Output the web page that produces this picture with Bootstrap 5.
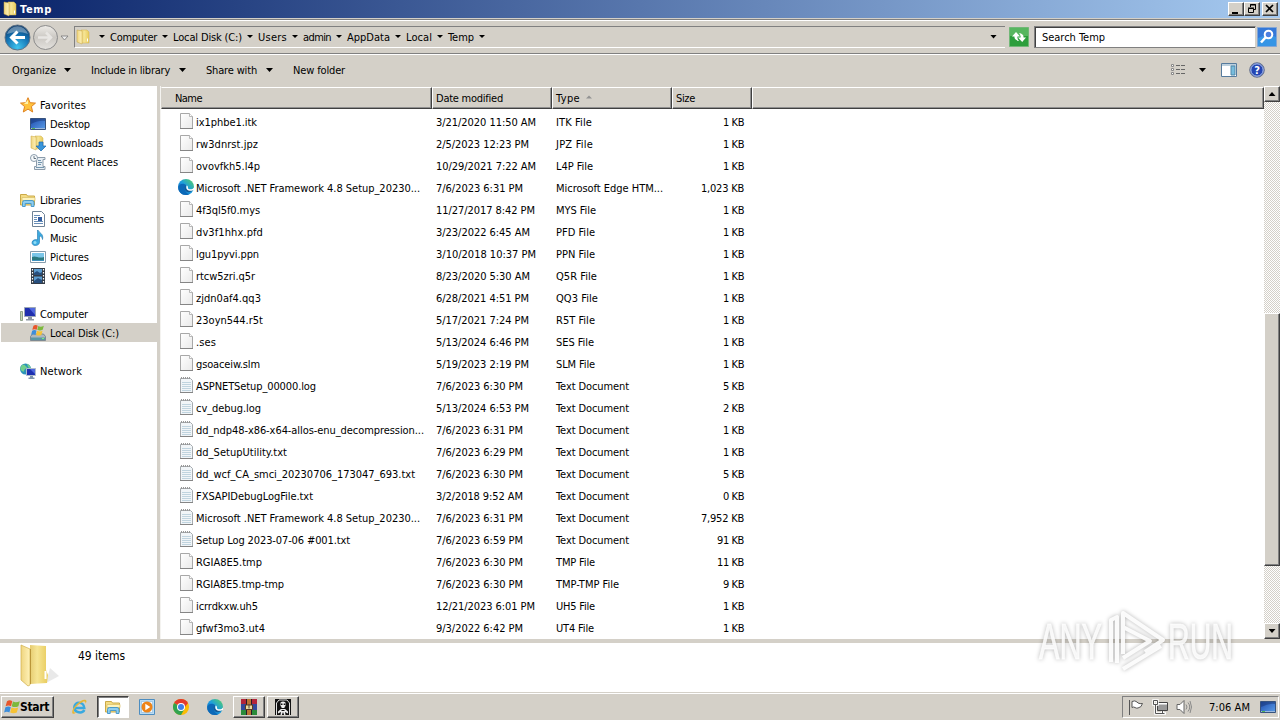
<!doctype html>
<html lang="en">

<head>
  <meta charset="utf-8">
  <meta name="viewport" content="width=device-width, initial-scale=1">
  <title>Temp</title>
  <link href="https://cdn.jsdelivr.net/npm/bootstrap@5.3.0/dist/css/bootstrap.min.css" rel="stylesheet">
  <style>
    :root {
      --face: #d4d0c8;
      --shade: #808080;
      --dark: #404040;
    }

    body {
      width: 1280px;
      height: 720px;
      overflow: hidden;
      background: var(--face);
      color: #000;
      font-family: Tahoma, "DejaVu Sans Condensed", "DejaVu Sans", sans-serif;
      font-size: 11px;
      line-height: 14px;
      white-space: nowrap;
    }

    body > div {
      flex: none;
    }

    svg {
      display: block;
      flex: none;
    }

    .fit {
      display: inline-block;
      padding-top: 2px;
    }

    .title-strip {
      height: 18px;
      padding: 0 2px 0 2px;
      background: linear-gradient(90deg, #0a246a, #a6caf0);
      color: #fff;
      font-weight: bold;
    }

    .raised {
      background: var(--face);
      border: 1px solid;
      border-color: #fff var(--dark) var(--dark) #fff;
      box-shadow: inset -1px -1px 0 var(--shade);
    }

    .win-btn {
      width: 16px;
      height: 14px;
      padding: 0;
    }

    .address-strip {
      height: 35px;
      margin-top: 1px;
      padding-left: 4px;
      border-top: 1px solid var(--shade);
      border-bottom: 1px solid var(--shade);
      box-shadow: inset 0 1px 0 #fff, 0 1px 0 #fff;
    }

    .address-box {
      height: 22px;
      margin-left: 4px;
      width: 931px;
      border: 1px solid var(--shade);
      border-right: 0;
      border-bottom-color: #fff;
    }

    .crumb {
      margin: 0 5px;
    }

    .tri {
      width: 7px;
      height: 4px;
      background: #000;
      clip-path: polygon(0 0, 100% 0, 50% 100%);
      flex: none;
    }

    .tri-sm {
      width: 6px;
      height: 3px;
    }

    .tri-up {
      clip-path: polygon(50% 0, 100% 100%, 0 100%);
    }

    .search-box {
      width: 222px;
      height: 22px;
      margin-left: 5px;
      padding-left: 7px;
      background: #fff;
      border: 1px solid var(--shade);
      border-right-color: var(--face);
      box-shadow: inset 1px 1px 0 var(--dark);
    }

    .command-strip {
      height: 32px;
      padding: 0 15px 0 12px;
    }

    .explorer {
      height: 553px;
    }

    .nav-pane {
      width: 160px;
      padding-top: 9px;
      background: #fff;
      border-right: 3px solid var(--face);
    }

    .nav-row {
      height: 19px;
      padding-left: 20px;
      gap: 4px;
    }

    .nav-row.child {
      padding-left: 30px;
    }

    .nav-row.chosen {
      margin: 0 -1px 0 1px;
      padding-left: 29px;
      background: var(--face);
    }

    .nav-gap {
      height: 19px;
    }

    .file-pane {
      background: #fff;
      border-left: 1px solid #f4f3f0;
    }

    .head-row {
      height: 23px;
      padding-top: 1px;
      background: var(--face);
    }

    .head-cell {
      height: 22px;
      padding-left: 3px;
      border: 1px solid;
      border-color: #fff #404040 #404040 #fff;
      box-shadow: inset -1px -1px 0 #909090;
    }

    .head-cell.col-name {
      padding-left: 13px;
      border-left-color: var(--face);
    }

    .col-name {
      width: 271px;
    }

    .col-other {
      width: 120px;
    }

    .col-size {
      width: 80px;
    }

    .file-list {
      padding-top: 2px;
    }

    .file-row {
      height: 22px;
      padding-left: 17px;
    }

    .file-row svg {
      margin-bottom: 2px;
    }

    .file-row .f-name {
      width: 258px;
      gap: 2px;
    }

    .file-row .f-size {
      width: 68px;
      text-align: right;
    }

    .scroll-rail {
      width: 16px;
      background: repeating-conic-gradient(#fff 0 25%, #d4d0c8 0 50%) 0 0 / 2px 2px;
    }

    .rail-btn {
      height: 16px;
    }

    .details-strip {
      height: 53px;
      background: #fff;
      border-top: 4px solid var(--face);
    }

    .task-strip {
      height: 28px;
      padding: 3px 1px 1px 1px;
      box-shadow: inset 0 1px 0 #d4d0c8, inset 0 2px 0 #fff;
    }

    .start-btn {
      width: 53px;
      height: 22px;
      padding-left: 2px;
      font-weight: bold;
      font-size: 12px;
    }

    .start-btn .fit {
      padding-top: 0;
    }

    .task-item {
      width: 32px;
      height: 22px;
      border: 1px solid transparent;
      margin-right: 2px;
    }

    .task-item.raised {
      border-color: #fff var(--dark) var(--dark) #fff;
    }

    .task-item.active {
      background: #fff;
      border-color: var(--dark) #fff #fff var(--dark);
      box-shadow: inset 1px 1px 0 var(--shade);
    }

    .tray {
      width: 157px;
      height: 22px;
      padding: 0 2px 0 5px;
      border: 1px solid;
      border-color: var(--shade) #fff #fff var(--shade);
    }

    .stamp {
      position: absolute;
      left: 1030px;
      top: 602px;
      pointer-events: none;
      overflow: visible;
      filter: drop-shadow(0 0 2px rgba(0, 0, 0, .32));
    }
  </style>
</head>

<body class="d-flex flex-column">

  <svg width="0" height="0" class="position-absolute">
    <defs>
      <linearGradient id="gFolder" x1="0" x2="1">
        <stop offset="0" stop-color="#e6cc71" />
        <stop offset=".4" stop-color="#f6e595" />
        <stop offset="1" stop-color="#e8cb5c" />
      </linearGradient>
      <linearGradient id="gFlap" x1="0" x2="1">
        <stop offset="0" stop-color="#efd580" />
        <stop offset="1" stop-color="#fff2b8" />
      </linearGradient>
      <linearGradient id="gScreen" x1="0" x2="1" y1="0" y2="1">
        <stop offset="0" stop-color="#1f4cae" />
        <stop offset="1" stop-color="#5b9ee8" />
      </linearGradient>
      <radialGradient id="gBack" cx=".5" cy=".9" r=".9">
        <stop offset="0" stop-color="#3fc4ee" />
        <stop offset=".55" stop-color="#1473b4" />
        <stop offset="1" stop-color="#0d3766" />
      </radialGradient>
      <linearGradient id="gFwd" x1="0" x2="0" y1="0" y2="1">
        <stop offset="0" stop-color="#eeece8" />
        <stop offset=".5" stop-color="#cbc8c3" />
        <stop offset="1" stop-color="#e4e2de" />
      </linearGradient>
      <linearGradient id="gEdge" x1="0" x2="1" y1="1" y2="0">
        <stop offset="0" stop-color="#0b57a8" />
        <stop offset=".5" stop-color="#1b9de2" />
        <stop offset="1" stop-color="#59d35c" />
      </linearGradient>
      <linearGradient id="gPaper" x1="0" x2="1" y1="0" y2="1">
        <stop offset="0" stop-color="#fff" />
        <stop offset="1" stop-color="#e9e9e9" />
      </linearGradient>
    </defs>

    <symbol id="i-folder" viewBox="0 0 16 16">
      <path d="M6 1h6l2 2v11H6z" fill="url(#gFolder)" stroke="#d3b34d" stroke-width=".5" />
      <path d="M2 1l5 1v13l-5-2z" fill="url(#gFlap)" stroke="#c8a640" stroke-width=".5" />
      <path d="M12.500 9.500v3" stroke="#fff" />
    </symbol>
    <symbol id="i-page" viewBox="-1 0 16 16">
      <path d="M1.500.5h9l3 3v12h-12z" fill="url(#gPaper)" stroke="#a8a8a8" />
      <path d="M10.500.5v3h3" fill="#fff" stroke="#a8a8a8" stroke-width=".8" />
      <path d="M1 15.500h13" stroke="#858585" />
    </symbol>
    <symbol id="i-text" viewBox="-1 0 16 16">
      <path d="M1.500 1.500h10l2 2v12h-12z" fill="#f1f5f8" stroke="#a5aaae" />
      <path d="M3 5.500h9M3 7.500h9M3 9.500h9M3 11.500h9M3 13.500h9" stroke="#c0d4df" />
      <path d="M2 1h10" stroke="#999" stroke-width="2" stroke-dasharray="1 1" />
      <path d="M1 15.500h13" stroke="#858585" />
    </symbol>
    <symbol id="i-edge" viewBox="0 0 16 16">
      <circle cx="8" cy="8" r="8" fill="url(#gEdge)" />
      <path d="M.3 9C.4 4 6.500 4 8.500 6.500 5.500 8 6 13 11 15.400 5 17.500.4 13.500.3 9z" fill="#0c69b8" />
      <path d="M8.500 6.200C6.500 8.500 9 12 15 11c-2.500 3.500-8 2.500-8.500-1.500C6.300 8 7 6.500 8.500 6.200z" fill="#165b98" />
      <path d="M8.600 6.500c2.200.8.8 2.700 2 3.400 1.800 1 4.500.2 5.400-1.500v2.300c-1.800 1.600-5.700 1.500-7-.2-1-1.300-.6-2.600-.4-4z" fill="#fff" />
    </symbol>
    <symbol id="i-star" viewBox="0 0 16 16">
      <path d="M8 .7l2.100 5 5.400.4-4.100 3.500 1.300 5.400L8 12.100 3.300 15l1.300-5.400L.5 6.100l5.400-.4z" fill="#ffc23c" stroke="#df8220" />
      <path d="M8 3v4L4 7z" fill="#fff2a8" />
    </symbol>
    <symbol id="i-desktop" viewBox="0 0 16 16">
      <path d="M.5 2.500h15v11H.5z" fill="url(#gScreen)" stroke="#37537e" />
      <path d="M1 8q8-4 14-3V3H1z" fill="#17336f" opacity=".5" />
      <path d="M1 12.500h14" stroke="#9bb9dd" />
      <path d="M2 12.500h3" stroke="#52b552" />
    </symbol>
    <symbol id="i-download" viewBox="0 0 16 16">
      <use href="#i-folder" x="-1" width="16" height="16" />
      <path d="M9 7h4v4h3l-5 5-5-5h3z" fill="#3995da" stroke="#1c69ad" stroke-width=".7" />
    </symbol>
    <symbol id="i-recent" viewBox="0 0 16 16">
      <path d="M5 3.500h10v2h-2v7h2v3H4.500v-3h2v-6" fill="#e6edf3" stroke="#8b9baa" />
      <path d="M8 6.500h3M8 8.500h4M8 10.500h3M6 13.500h8" stroke="#7496ae" />
      <circle cx="4" cy="4" r="3.500" fill="#f7fafc" stroke="#8b9cab" />
      <path d="M4 2v2.500h2" stroke="#456" fill="none" stroke-width=".8" />
    </symbol>
    <symbol id="i-library" viewBox="0 0 16 16">
      <path d="M.5 2.500h6l1 1.500h7v9H.5z" fill="#f4dc84" stroke="#cba947" />
      <path d="M2 5.500h13v3H2z" fill="#fdf3bd" stroke="#d9bd62" stroke-width=".7" />
      <path d="M2.500 14.500v-4q0-2 2-2h7.500q2 0 2 2v4h-2.800v-3h-6v3z" fill="#8dcdf0" stroke="#3f94c8" stroke-width=".9" />
    </symbol>
    <symbol id="i-document" viewBox="0 0 16 16">
      <path d="M2.500.5h9l3 3v12h-12z" fill="#fff" stroke="#6e8296" />
      <path d="M4 4.500h6M4 6.500h3M4 8.500h3M4 10.500h9M4 12.500h9" stroke="#688eb8" />
      <path d="M8 6h4v4H8z" fill="#325ca0" />
    </symbol>
    <symbol id="i-music" viewBox="0 0 16 16">
      <path d="M8 0c1 3 6 3.500 4.500 9.500C12.500 7 10.500 6 9.500 6v6.500C9 16.500 2 16.500 2 12.700 2 10 5.500 9 7.500 10V0z" fill="#3caae0" stroke="#2277ac" stroke-width=".6" />
      <circle cx="5" cy="12.400" r="1.500" fill="#8edcf5" />
    </symbol>
    <symbol id="i-picture" viewBox="0 0 16 16">
      <path d="M.5 2.500h15v11H.5z" fill="#fff" stroke="#869cac" />
      <path d="M2 4h12v8H2z" fill="#7bc6e8" />
      <path d="M2 8c4-2 6 2 12 0v4H2z" fill="#2b7a80" />
      <path d="M2 11h12v1H2z" fill="#3e91bd" />
    </symbol>
    <symbol id="i-video" viewBox="0 0 16 16">
      <path d="M1 0h14v16H1z" fill="#333b46" />
      <path d="M4 1h8v6H4zM4 8.500h8V15H4z" fill="#5b9cd0" />
      <path d="M4 5l3-2 3 2 2-1v3H4zM4 13l4-3 4 2v3H4z" fill="#274e7d" />
      <path d="M2.500 1v15M13.500 1v15" stroke="#fff" stroke-width="1.200" stroke-dasharray="1.500 1.500" />
    </symbol>
    <symbol id="i-computer" viewBox="0 0 16 16">
      <path d="M.5 5.500h2v9h-2z" fill="#c7d6b4" stroke="#7c9076" stroke-width=".8" />
      <path d="M4.500 1.500h11v9h-11z" fill="#1f2fae" stroke="#9ba6b6" />
      <path d="M9 2l6 0v7z" fill="#5068df" />
      <path d="M8 11h4v2h2v1.500H6V13h2z" fill="#8d97a4" />
    </symbol>
    <symbol id="i-flag" viewBox="0 0 16 16">
      <path d="M3 2.300c2-1.500 4-1 5.300 0L7 7.200C5.500 6.200 3.500 6.200 1.600 7.200z" fill="#e8562a" />
      <path d="M9 2.600c2 1.200 4.500.8 6.800-.4l-1.400 5c-2.300 1.200-4.600 1.200-6.700 0z" fill="#7cb93c" />
      <path d="M1.400 8.200c2-1 4-1 5.400 0L5.400 13.400c-1.500-1-3.500-1-5.300 0z" fill="#3d8edb" />
      <path d="M7.500 8.400c2.200 1 4.600 1 6.700 0l-1.400 5c-2.200 1.100-4.500 1.100-6.600 0z" fill="#f6c235" />
    </symbol>
    <symbol id="i-disk" viewBox="0 0 16 16">
      <path d="M2.500 9h11l2 2.500v4H.5v-4z" fill="#aeb7be" stroke="#6c7a85" stroke-width=".8" />
      <path d="M1 12.500h14v2.500H1z" fill="#5b97a4" />
      <path d="M12 13.500h2" stroke="#7cf07c" />
      <use href="#i-flag" x="1" y="-1" width="13" height="13" />
    </symbol>
    <symbol id="i-network" viewBox="0 0 16 16">
      <circle cx="5.500" cy="6" r="5.500" fill="#2b92b8" />
      <path d="M2 2c4-1 3 2 5 2S4 6 4 8 0 7 .3 5zM7 .8c3 .8 4 4 3.500 5L8 4z" fill="#71cf8d" />
      <path d="M6.500 5.500h9v7h-9z" fill="#1c2fb0" stroke="#b0bccb" />
      <path d="M10 6h5v5z" fill="#4e68df" />
      <path d="M10 13h3v1.500h1.500V16h-6v-1.500H10z" fill="#7f95ac" />
    </symbol>
    <symbol id="i-ie" viewBox="0 0 16 16">
      <path d="M13.300 11c-1.700 3.700-10 3.300-10-2.700s9.600-6.300 10 .8H4" fill="none" stroke="#38a9e0" stroke-width="2.500" />
      <path d="M1.500 14.500C-1 10 11-1.500 15 1.200c1 .8.300 2.500-.5 3.500.2-1.700-.7-2.700-3-1.700C7 5 3 10 2.800 12c-.2 1.800 1.700 1.600 3 .8-1.300 1.600-3.400 2.600-4.300 1.700z" fill="#e6b636" />
    </symbol>
    <symbol id="i-media" viewBox="0 0 16 16">
      <path d="M.5.5h15v15H.5z" fill="#b9dcf4" stroke="#4d8dc0" />
      <path d="M2.500 2.500h11v11h-11z" fill="#f4f9fd" stroke="#87b6db" stroke-width=".6" />
      <circle cx="8" cy="8" r="5.500" fill="#ee8418" />
      <path d="M6.300 4.800L11.300 8l-5 3.200z" fill="#fff" />
    </symbol>
    <symbol id="i-chrome" viewBox="0 0 16 16">
      <circle cx="8" cy="8" r="8" fill="#fbbc05" />
      <path d="M8 8L1.070 4A8 8 0 0 1 14.930 4z" fill="#e33b2e" />
      <path d="M8 8L1.070 4A8 8 0 0 0 8 16l3.500-6z" fill="#31a350" />
      <path d="M8 4h6.930L12 8z" fill="#e33b2e" />
      <circle cx="8" cy="8" r="4" fill="#fff" />
      <circle cx="8" cy="8" r="3" fill="#3f7fe8" />
    </symbol>
    <symbol id="i-rar" viewBox="0 0 16 16">
      <path d="M0 0h16v5H0z" fill="#b3253a" />
      <path d="M0 5h16v6H0z" fill="#334a9b" />
      <path d="M0 11h16v5H0z" fill="#2a8b3a" />
      <path d="M5 0h1v16H5zM10 0h1v16h-1z" fill="#281d28" />
      <path d="M6 0h4v16H6z" fill="#bb7434" />
      <path d="M4.500 6h7v4.500h-7z" fill="#eadba0" stroke="#5c3c1f" />
      <path d="M8 5.500v4" stroke="#444" />
    </symbol>
    <symbol id="i-figure" viewBox="0 0 16 16">
      <path d="M0 0h16v16H0z" fill="#111" />
      <path d="M1.500 16V4L4 1h8l2.500 3v12" fill="none" stroke="#ddd" />
      <path d="M5.500 3.500Q8 1.500 10.500 3.500V7L9.500 8v1.500l3.500 3v2l-3-1.500.5 3H9.200L8 13l-1.200 3H5.500l.5-3-3 1.500v-2l3.500-3V8l-1-1z" fill="#eee" />
      <path d="M6 4.500h1.500V6H6zM8.700 4.500h1.500V6H8.700z" fill="#111" />
      <path d="M6 9.500h4M6.500 11.500h3" stroke="#111" />
    </symbol>
  </svg>

  <!-- title bar -->
  <div class="title-strip d-flex align-items-center">
    <svg width="16" height="16"><use href="#i-folder" /></svg>
    <span class="fit" data-w="32" style="margin-left:2px">Temp</span>
    <div class="d-flex ms-auto">
      <button class="raised win-btn"><svg width="14" height="12"><path d="M3 9h6v2H3z" /></svg></button>
      <button class="raised win-btn"><svg width="14" height="12"><path d="M5.500 4V1.500h5v5H9M5 2h6" fill="none" stroke="#000" /><path d="M3.500 5.500h5v4h-5zM3 5h6" fill="none" stroke="#000" /></svg></button>
      <button class="raised win-btn" style="margin-left:2px"><svg width="14" height="12"><path d="M3 2l7 7M10 2l-7 7" stroke="#000" stroke-width="1.700" /></svg></button>
    </div>
  </div>

  <!-- address bar -->
  <div class="address-strip d-flex align-items-center">
    <svg width="66" height="28" viewBox="0 0 66 28">
      <circle cx="13.500" cy="14.500" r="12.500" fill="url(#gBack)" stroke="#5f7285" />
      <path d="M3 11a11 11 0 0 1 21 0q-10-4-21 0z" fill="#fff" opacity=".35" />
      <path d="M21 14.500H9M13.500 8.500l-6 6 6 6" fill="none" stroke="#fff" stroke-width="3" />
      <circle cx="41.500" cy="14.500" r="12" fill="url(#gFwd)" stroke="#8b8b8b" />
      <path d="M34 14.500h12M42 9.500l5 5-5 5" fill="none" stroke="#e8e6e3" stroke-width="2.500" />
      <path d="M57 13h7l-3.500 4z" fill="#eee" stroke="#777" stroke-width=".8" />
    </svg>
    <div class="address-box d-flex align-items-center">
      <svg width="16" height="16" style="margin-right:8px"><use href="#i-folder" /></svg>
      <div class="tri tri-sm" id="crumbStart"></div>
      <div class="tri ms-auto"></div>
      <div class="mx-1"></div>
    </div>
    <svg width="20" height="20" class="ms-1">
      <path d="M.5.500h19v19H.5z" fill="#2d9e3c" stroke="#71b777" />
      <path d="M1 1h18v8H1z" fill="#73c776" opacity=".6" />
      <path d="M3 9.500L7 5l4 4.500H8.500Q8 12 10 14 5 13 5.500 9.500zM9 10.500h2.500Q12 8 10 6q5 1 4.500 4.500H17L13.200 15z" fill="#fff" />
    </svg>
    <div class="search-box d-flex align-items-center"><span class="fit" data-w="63">Search Temp</span></div>
    <svg width="20" height="20" style="margin-left:1px">
      <path d="M.5.500h19v19H.5z" fill="#3478d8" stroke="#83a6d5" />
      <path d="M1 11q10-5 18-1v9H1z" fill="#38a8ee" opacity=".6" />
      <circle cx="11.500" cy="7.500" r="3.800" fill="#4c7fe0" stroke="#fff" stroke-width="2" />
      <path d="M8.500 10.500L4 15.500" stroke="#fff" stroke-width="2.600" />
    </svg>
  </div>

  <!-- command bar -->
  <div class="command-strip d-flex align-items-center">
    <span class="fit" data-w="44">Organize</span>
    <div class="tri" style="margin-left:8px"></div>
    <span class="fit" data-w="79" style="margin-left:20px">Include in library</span>
    <div class="tri" style="margin-left:9px"></div>
    <span class="fit" data-w="51" style="margin-left:20px">Share with</span>
    <div class="tri" style="margin-left:9px"></div>
    <span class="fit" data-w="52" style="margin-left:20px">New folder</span>
    <svg width="16" height="12" class="ms-auto">
      <path d="M1.500.5h2v2h-2zM1.500 4.500h2v2h-2zM1.500 8.500h2v2h-2z" fill="#fff" stroke="#888" />
      <path d="M6 1.500h4M11 1.500h4M6 5.500h4M11 5.500h4M6 9.500h4M11 9.500h4" stroke="#666" />
    </svg>
    <div class="tri" style="margin-left:13px"></div>
    <svg width="16" height="14" style="margin-left:15px">
      <path d="M.5.500h15v13H.5z" fill="#fff" stroke="#567b9d" />
      <path d="M1 2h14" stroke="#7ba1bc" /><path d="M10 3h4v9h-4z" fill="#78bddd" stroke="#4f87a9" />
    </svg>
    <svg width="16" height="16" style="margin-left:12px">
      <circle cx="8" cy="8" r="7.300" fill="#2546b3" stroke="#6e788e" />
      <circle cx="8" cy="8" r="6.200" fill="none" stroke="#b8c9ed" />
      <text x="8" y="12" text-anchor="middle" fill="#fff" font-size="11" font-weight="bold">?</text>
    </svg>
  </div>

  <!-- navigation tree and file list -->
  <div class="explorer d-flex">
    <div class="nav-pane" id="navPane"></div>
    <div class="file-pane flex-grow-1 overflow-hidden">
      <div class="head-row d-flex">
        <div class="head-cell col-name d-flex align-items-center"><span class="fit" data-w="27">Name</span></div>
        <div class="head-cell col-other d-flex align-items-center"><span class="fit" data-w="67">Date modified</span></div>
        <div class="head-cell col-other d-flex align-items-center"><span class="fit" data-w="24">Type</span>
          <svg width="6" height="4" style="margin:-3px 0 0 6px"><path d="M0 3.500L3 .5l3 3z" fill="#929292" /></svg></div>
        <div class="head-cell col-size d-flex align-items-center"><span class="fit" data-w="19">Size</span></div>
        <div class="head-cell flex-grow-1"></div>
      </div>
      <div id="fileList" class="file-list"></div>
    </div>
    <div class="scroll-rail d-flex flex-column">
      <div class="raised rail-btn d-flex align-items-center justify-content-center"><div class="tri tri-up"></div></div>
      <div class="raised" style="margin-top:211px;height:253px"></div>
      <div class="raised rail-btn d-flex align-items-center justify-content-center mt-auto"><div class="tri"></div></div>
    </div>
  </div>

  <!-- details pane -->
  <div class="details-strip d-flex">
    <svg width="48" height="48" viewBox="0 0 48 48" style="margin-left:15px">
      <path d="M31 40l13-7-9-8z" fill="#999" opacity=".22" />
      <path d="M15 2l16 1v24l2 5-1 8-17 1z" fill="url(#gFolder)" />
      <path d="M6 2l9 4v36l-2 1-7-6z" fill="url(#gFlap)" stroke="#d0af4a" stroke-width=".7" />
      <path d="M15.500 6v35" stroke="#ba963a" />
      <path d="M30.500 28v8" stroke="#fff" stroke-width="2" />
    </svg>
    <span style="margin:4px 0 0 15px;font-size:12px"><span class="fit" data-w="47">49 items</span></span>
  </div>

  <!-- taskbar -->
  <div class="task-strip d-flex align-items-center">
    <div class="raised start-btn d-flex align-items-center">
      <svg width="16" height="16"><use href="#i-flag" /></svg><span class="fit" data-w="29">Start</span>
    </div>
    <div class="d-flex" id="taskItems" style="margin-left:9px"></div>
    <div class="tray d-flex align-items-center ms-auto">
      <svg width="16" height="16"><path d="M1.500 1v15M4 2.500q3-1.500 5 .5l1 1q2 1 4.500.5-1 4-4.500 4.500-2 .5-3-.5-1.500-1-3 0z" fill="#fff" stroke="#555" /></svg>
      <svg width="16" height="16" style="margin-left:8px">
        <path d="M5.500 3.500h10v8h-10z" fill="#999" stroke="#444" /><path d="M6 4h9v1.500H6z" fill="#fff" />
        <path d="M1.500 1.500h4v4h-4zM3.500 5.500v9h9M8 14.500h6M10.500 12v2" fill="none" stroke="#fff" stroke-width="2.500" />
        <path d="M1.500 1.500h4v4h-4zM3.500 5.500v9h9M10.500 12v2" fill="none" stroke="#555" />
      </svg>
      <svg width="16" height="16" style="margin-left:8px"><path d="M1 5.500h3l4-4v13l-4-4H1z" fill="#fff" stroke="#666" /><path d="M10 5.500q2 2.500 0 5M12 3.500q3.500 4.500 0 9M14 2q3 6 0 12" fill="none" stroke="#888" /></svg>
      <span class="fit" data-w="41" style="margin-left:17px">7:06 AM</span>
      <svg width="16" height="16" class="ms-auto"><use href="#i-desktop" /></svg>
    </div>
  </div>

  <svg class="stamp" width="230" height="76" viewBox="0 0 230 76">
    <g fill="#fff" fill-opacity=".85" stroke="#fff" stroke-opacity=".7" font-family="Liberation Sans Narrow, Liberation Sans" font-size="50">
      <text x="9" y="57" textLength="63" lengthAdjust="spacingAndGlyphs">ANY</text>
      <text x="138" y="57" textLength="65" lengthAdjust="spacingAndGlyphs">RUN</text>
    </g>
    <path d="M81 60V18l6-3v46M93 52V11l40 27-18 12M93 25l27 14-27 17M93 67l38-23" fill="none" stroke="#fff" stroke-width="4" stroke-linejoin="round" opacity=".9" />
  </svg>

  <script>
    // [label, text width]
    const crumbs = [["Computer", 47], ["Local Disk (C:)", 69], ["Users", 29], ["admin", 28], ["AppData", 43], ["Local", 26], ["Temp", 26]];

    // icon, label, text width, row classes
    const navItems = [
      ["star", "Favorites", 46, ""],
      ["desktop", "Desktop", 40, "child"],
      ["download", "Downloads", 53, "child"],
      ["recent", "Recent Places", 68, "child"],
      null,
      ["library", "Libraries", 41, ""],
      ["document", "Documents", 54, "child"],
      ["music", "Music", 27, "child"],
      ["picture", "Pictures", 39, "child"],
      ["video", "Videos", 32, "child"],
      null,
      ["computer", "Computer", 48, ""],
      ["disk", "Local Disk (C:)", 69, "child chosen"],
      null,
      ["network", "Network", 42, ""]
    ];

    // icon, name, name width, date, date width, type, type width, size
    const files = [
      ["page", "ix1phbe1.itk", 61, "3/21/2020 11:50 AM", 100, "ITK File", 36, "1 KB"],
      ["page", "rw3dnrst.jpz", 62, "2/5/2023 12:23 PM", 93, "JPZ File", 37, "1 KB"],
      ["page", "ovovfkh5.l4p", 64, "10/29/2021 7:22 AM", 100, "L4P File", 37, "1 KB"],
      ["edge", "Microsoft .NET Framework 4.8 Setup_20230...", 224, "7/6/2023 6:31 PM", 87, "Microsoft Edge HTM...", 107, "1,023 KB"],
      ["page", "4f3ql5f0.mys", 64, "11/27/2017 8:42 PM", 99, "MYS File", 40, "1 KB"],
      ["page", "dv3f1hhx.pfd", 67, "3/23/2022 6:45 AM", 94, "PFD File", 39, "1 KB"],
      ["page", "lgu1pyvi.ppn", 63, "3/10/2018 10:37 PM", 100, "PPN File", 39, "1 KB"],
      ["page", "rtcw5zri.q5r", 59, "8/23/2020 5:30 AM", 94, "Q5R File", 41, "1 KB"],
      ["page", "zjdn0af4.qq3", 65, "6/28/2021 4:51 PM", 93, "QQ3 File", 42, "1 KB"],
      ["page", "23oyn544.r5t", 67, "5/17/2021 7:24 PM", 93, "R5T File", 39, "1 KB"],
      ["page", ".ses", 20, "5/13/2024 6:46 PM", 93, "SES File", 38, "1 KB"],
      ["page", "gsoaceiw.slm", 64, "5/19/2023 2:19 PM", 93, "SLM File", 39, "1 KB"],
      ["text", "ASPNETSetup_00000.log", 120, "7/6/2023 6:30 PM", 87, "Text Document", 73, "5 KB"],
      ["text", "cv_debug.log", 65, "5/13/2024 6:53 PM", 93, "Text Document", 73, "2 KB"],
      ["text", "dd_ndp48-x86-x64-allos-enu_decompression...", 228, "7/6/2023 6:31 PM", 87, "Text Document", 73, "1 KB"],
      ["text", "dd_SetupUtility.txt", 91, "7/6/2023 6:29 PM", 87, "Text Document", 73, "1 KB"],
      ["text", "dd_wcf_CA_smci_20230706_173047_693.txt", 219, "7/6/2023 6:30 PM", 87, "Text Document", 73, "5 KB"],
      ["text", "FXSAPIDebugLogFile.txt", 117, "3/2/2018 9:52 AM", 87, "Text Document", 73, "0 KB"],
      ["text", "Microsoft .NET Framework 4.8 Setup_20230...", 224, "7/6/2023 6:31 PM", 87, "Text Document", 73, "7,952 KB"],
      ["text", "Setup Log 2023-07-06 #001.txt", 154, "7/6/2023 6:59 PM", 87, "Text Document", 73, "91 KB"],
      ["page", "RGIA8E5.tmp", 66, "7/6/2023 6:30 PM", 87, "TMP File", 39, "11 KB"],
      ["page", "RGIA8E5.tmp-tmp", 88, "7/6/2023 6:30 PM", 87, "TMP-TMP File", 63, "9 KB"],
      ["page", "icrrdkxw.uh5", 62, "12/21/2023 6:01 PM", 99, "UH5 File", 39, "1 KB"],
      ["page", "gfwf3mo3.ut4", 69, "9/3/2022 6:42 PM", 87, "UT4 File", 38, "1 KB"]
    ];

    const sizeWidths = { 4: 21, 5: 27, 8: 43 };
    const tasks = [["ie", ""], ["library", "active"], ["media", ""], ["chrome", ""], ["edge", ""], ["rar", "raised"], ["figure", "raised"]];

    const icon = (name) => `<svg width="16" height="16"><use href="#i-${name}" /></svg>`;
    const label = (text, w) => `<span class="fit" data-w="${w}">${text}</span>`;

    document.getElementById("crumbStart").insertAdjacentHTML("afterend", crumbs.map(([text, w]) =>
      `<span class="crumb">${label(text, w)}</span><div class="tri tri-sm"></div>`).join(""));

    document.getElementById("navPane").innerHTML = navItems.map(item => item
      ? `<div class="nav-row d-flex align-items-center ${item[3]}">${icon(item[0])}${label(item[1], item[2])}</div>`
      : `<div class="nav-gap"></div>`).join("");

    document.getElementById("fileList").innerHTML = files.map(f => `
      <div class="file-row d-flex align-items-center">
        <div class="f-name d-flex align-items-center">${icon(f[0])}${label(f[1], f[2])}</div>
        <div class="col-other">${label(f[3], f[4])}</div>
        <div class="col-other">${label(f[5], f[6])}</div>
        <div class="f-size">${label(f[7], sizeWidths[f[7].length])}</div>
      </div>`).join("");

    document.getElementById("taskItems").innerHTML = tasks.map(([name, cls]) =>
      `<div class="task-item d-flex align-items-center justify-content-center ${cls}">${icon(name)}</div>`).join("");

    document.querySelectorAll(".fit").forEach(el => {
      const w = el.getBoundingClientRect().width;
      el.style.letterSpacing = ((el.dataset.w - w) / el.textContent.length) + "px";
    });
  </script>

  <script src="https://cdn.jsdelivr.net/npm/bootstrap@5.3.0/dist/js/bootstrap.bundle.min.js"></script>

</body>

</html>
